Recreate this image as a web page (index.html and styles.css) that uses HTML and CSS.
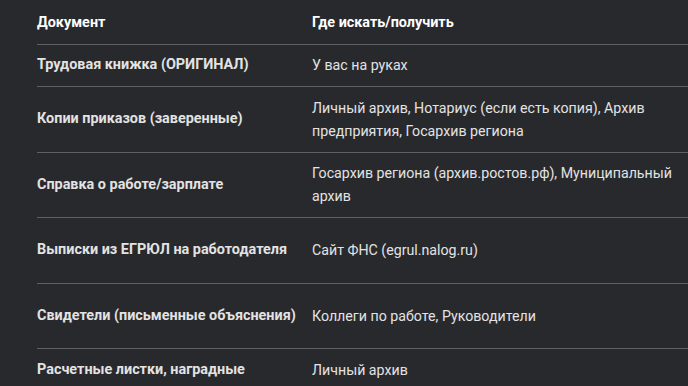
FILE: index.html
```html
<!DOCTYPE html>
<html lang="ru">
<head>
<meta charset="utf-8">
<link rel="stylesheet" href="styles.css">
</head>
<body>
<div class="wrap">
<table class="docs">
  <thead>
    <tr><th class="c1">Документ</th><th class="c2">Где искать/получить</th></tr>
  </thead>
  <tbody>
    <tr><td class="c1">Трудовая книжка (ОРИГИНАЛ)</td><td class="c2">У вас на руках</td></tr>
    <tr><td class="c1">Копии приказов (заверенные)</td><td class="c2">Личный архив, Нотариус (если есть копия), Архив предприятия, Госархив региона</td></tr>
    <tr><td class="c1">Справка о работе/зарплате</td><td class="c2">Госархив региона (архив.ростов.рф), Муниципальный архив</td></tr>
    <tr class="tall"><td class="c1">Выписки из ЕГРЮЛ на работодателя</td><td class="c2">Сайт ФНС (egrul.nalog.ru)</td></tr>
    <tr class="tall"><td class="c1">Свидетели (письменные объяснения)</td><td class="c2">Коллеги по работе, Руководители</td></tr>
    <tr><td class="c1">Расчетные листки, наградные</td><td class="c2">Личный архив</td></tr>
  </tbody>
</table>
</div>
</body>
</html>
```

FILE: styles.css
```css
html, body {
  margin: 0;
  padding: 0;
  background: #28292d;
  overflow: hidden;
}
.wrap {
  padding-left: 37px;
}
.docs {
  width: 651px;
  border-collapse: collapse;
  font-family: Roboto, "Noto Sans", sans-serif;
  font-size: 14.4px;
  line-height: 22.8px;
  color: #e3e3e3;
}
.docs th, .docs td {
  text-align: left;
  vertical-align: middle;
  padding: 9.5px 0 9.4px 0;
  border-bottom: 1px solid #5f6063;
}
.docs th {
  padding-top: 11.6px;
  font-weight: 700;
  color: #ffffff;
}
.docs td.c1 {
  font-weight: 700;
}
.c1 {
  width: 275px;
}
.docs td.c2 {
  font-size: 14.2px;
}
.tall {
  height: 65.5px;
}
```
